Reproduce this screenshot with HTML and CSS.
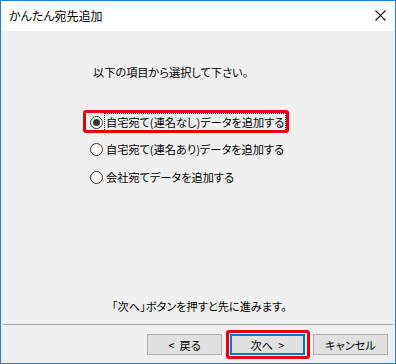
FILE: index.html
```html
<!DOCTYPE html>
<html lang="ja">
<head>
<meta charset="utf-8">
<title>かんたん宛先追加</title>
<link rel="stylesheet" href="styles.css">
</head>
<body>
<div class="window">
  <div class="titlebar">
    <span class="title">かんたん宛先追加</span>
    <svg class="close" width="11" height="11" viewBox="0 0 11 11" aria-hidden="true">
      <path d="M0.5 0.5 L10.5 10.5 M10.5 0.5 L0.5 10.5" stroke="#111" stroke-width="1.1" fill="none"/>
    </svg>
  </div>
  <div class="body">
    <p class="lead">以下の項目から選択して下さい。</p>
    <div class="options">
      <div class="option marked">
        <span class="radio checked"></span>
        <span class="label focused">自宅宛て(連名なし)データを追加する</span>
      </div>
      <div class="option">
        <span class="radio"></span>
        <span class="label">自宅宛て(連名あり)データを追加する</span>
      </div>
      <div class="option">
        <span class="radio"></span>
        <span class="label">会社宛てデータを追加する</span>
      </div>
    </div>
    <p class="hint">「次へ」ボタンを押すと先に進みます。</p>
    <div class="sep"></div>
    <div class="buttons">
      <span class="btn">&lt;&nbsp; 戻る</span>
      <span class="btn default marked">次へ &nbsp;&gt;</span>
      <span class="btn">キャンセル</span>
    </div>
  </div>
</div>
</body>
</html>
```
FILE: styles.css
```css
html, body {
  margin: 0;
  padding: 0;
}
body {
  width: 396px;
  height: 364px;
  overflow: hidden;
  font-family: "Noto Sans CJK JP", "Noto Sans", sans-serif;
  font-size: 11.2px;
  font-feature-settings: "palt";
  color: #000;
}
.window {
  box-sizing: border-box;
  width: 396px;
  height: 364px;
  border: 1px solid #1883d7;
  display: flex;
  flex-direction: column;
  background: #f0f0f0;
}
.titlebar {
  height: 30px;
  flex: none;
  background: #fff;
  display: flex;
  align-items: center;
  justify-content: space-between;
  padding: 0 9px 0 8px;
}
.title {
  font-size: 12px;
  line-height: 16px;
  margin-top: -1px;
}
.close {
  display: block;
  margin-top: -2px;
}
.body {
  flex: 1;
  display: flex;
  flex-direction: column;
  padding-bottom: 8px;
}
.lead {
  margin: 33px 0 0 92px;
  line-height: 16px;
}
.options {
  margin: 32px 0 0 89px;
  display: flex;
  flex-direction: column;
  gap: 7.5px;
}
.option {
  position: relative;
  display: flex;
  align-items: center;
  height: 20px;
  align-self: flex-start;
}
.option.marked::after {
  content: "";
  position: absolute;
  left: -7px;
  right: -3px;
  top: -2px;
  bottom: -1px;
  border: 3px solid #e60012;
  border-radius: 3px;
}
.radio {
  box-sizing: border-box;
  width: 13px;
  height: 13px;
  border: 1px solid #333;
  border-radius: 50%;
  background: #fff;
  display: flex;
  align-items: center;
  justify-content: center;
  flex: none;
}
.radio.checked::before {
  content: "";
  width: 7px;
  height: 7px;
  border-radius: 50%;
  background: #333;
}
.label {
  margin-left: 1px;
  border: 1px dotted transparent;
  padding: 0 1px 0 1px;
  line-height: 17px;
}
.label.focused {
  border-color: #222;
}
.hint {
  margin: auto 0 0 111px;
  line-height: 16px;
}
.sep {
  height: 1px;
  background: #a0a0a0;
  margin: 10px 2px 0 2px;
}
.buttons {
  margin-top: 9px;
  display: flex;
  justify-content: flex-end;
  gap: 8px;
  padding-right: 7px;
}
.btn {
  position: relative;
  box-sizing: border-box;
  width: 75px;
  height: 21px;
  border: 1px solid #adadad;
  background: #e1e1e1;
  display: flex;
  align-items: center;
  justify-content: center;
  line-height: 16px;
}
.btn.default {
  border: 2px solid #0078d7;
}
.btn.marked::after {
  content: "";
  position: absolute;
  left: -6px;
  right: -7px;
  top: -6px;
  bottom: -6px;
  border: 3px solid #e60012;
  border-radius: 3px;
}
```
